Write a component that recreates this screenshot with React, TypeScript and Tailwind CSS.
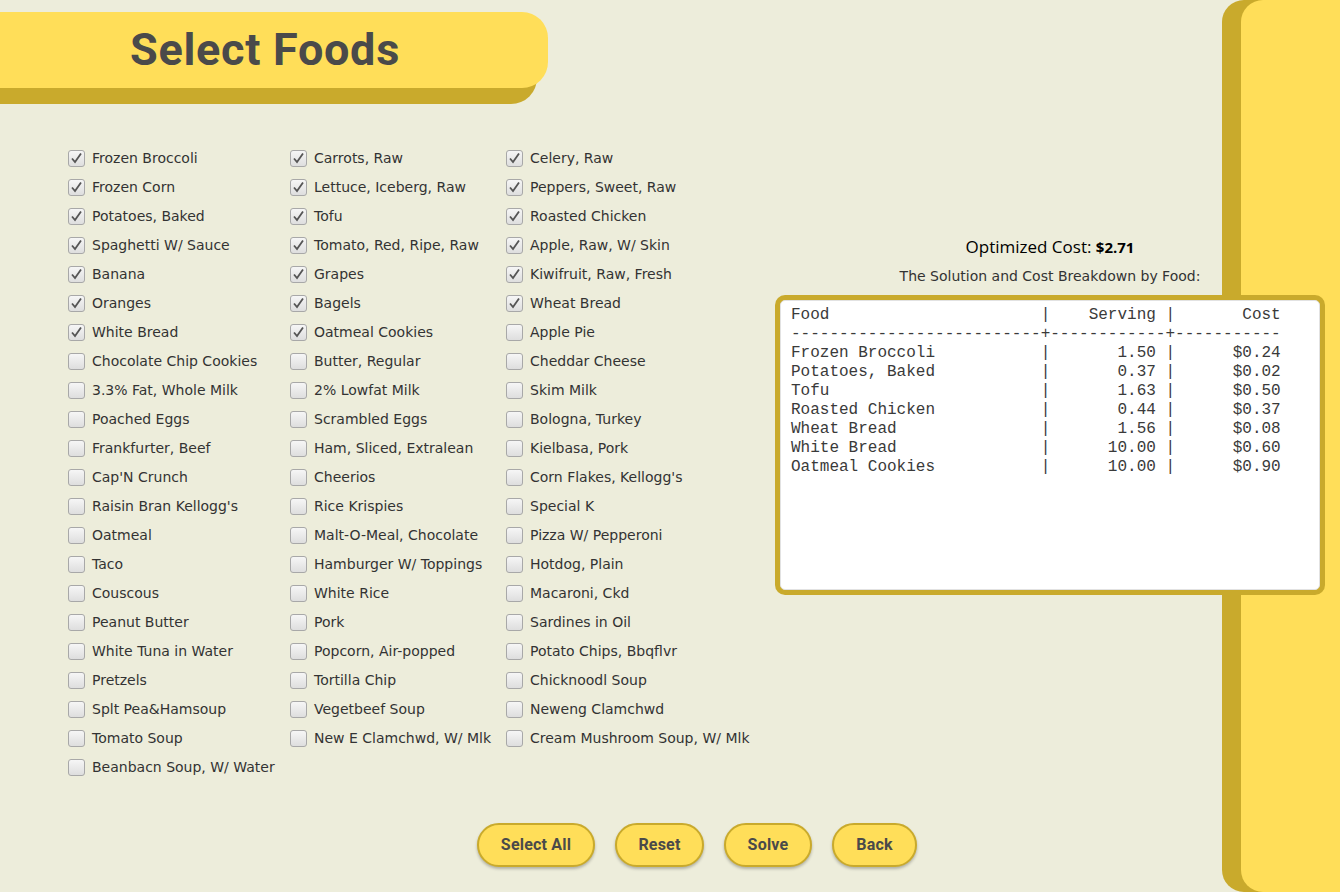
import React from "react";

const FOODS = [
  "Frozen Broccoli", "Carrots, Raw", "Celery, Raw",
  "Frozen Corn", "Lettuce, Iceberg, Raw", "Peppers, Sweet, Raw",
  "Potatoes, Baked", "Tofu", "Roasted Chicken",
  "Spaghetti W/ Sauce", "Tomato, Red, Ripe, Raw", "Apple, Raw, W/ Skin",
  "Banana", "Grapes", "Kiwifruit, Raw, Fresh",
  "Oranges", "Bagels", "Wheat Bread",
  "White Bread", "Oatmeal Cookies", "Apple Pie",
  "Chocolate Chip Cookies", "Butter, Regular", "Cheddar Cheese",
  "3.3% Fat, Whole Milk", "2% Lowfat Milk", "Skim Milk",
  "Poached Eggs", "Scrambled Eggs", "Bologna, Turkey",
  "Frankfurter, Beef", "Ham, Sliced, Extralean", "Kielbasa, Pork",
  "Cap'N Crunch", "Cheerios", "Corn Flakes, Kellogg's",
  "Raisin Bran Kellogg's", "Rice Krispies", "Special K",
  "Oatmeal", "Malt-O-Meal, Chocolate", "Pizza W/ Pepperoni",
  "Taco", "Hamburger W/ Toppings", "Hotdog, Plain",
  "Couscous", "White Rice", "Macaroni, Ckd",
  "Peanut Butter", "Pork", "Sardines in Oil",
  "White Tuna in Water", "Popcorn, Air-popped", "Potato Chips, Bbqflvr",
  "Pretzels", "Tortilla Chip", "Chicknoodl Soup",
  "Splt Pea&Hamsoup", "Vegetbeef Soup", "Neweng Clamchwd",
  "Tomato Soup", "New E Clamchwd, W/ Mlk", "Cream Mushroom Soup, W/ Mlk",
  "Beanbacn Soup, W/ Water",
];

const CHECKED_COUNT = 20;

const RESULTS: [string, string, string][] = [
  ["Frozen Broccoli", "1.50", "$0.24"],
  ["Potatoes, Baked", "0.37", "$0.02"],
  ["Tofu", "1.63", "$0.50"],
  ["Roasted Chicken", "0.44", "$0.37"],
  ["Wheat Bread", "1.56", "$0.08"],
  ["White Bread", "10.00", "$0.60"],
  ["Oatmeal Cookies", "10.00", "$0.90"],
];

const buildReport = () => {
  const lines = [
    "Food".padEnd(26) + "|" + "Serving".padStart(11) + " |" + "Cost".padStart(11),
    "-".repeat(26) + "+" + "-".repeat(12) + "+" + "-".repeat(11),
  ];
  RESULTS.forEach(([name, serving, cost]) => {
    lines.push(name.padEnd(26) + "|" + serving.padStart(11) + " |" + cost.padStart(11));
  });
  return lines.join("\n");
};

const CheckBox = ({ checked }: { checked: boolean }) => (
  <span className="flex h-[17px] w-[17px] shrink-0 items-center justify-center rounded-[3px] border border-[#a8a8a8] bg-gradient-to-b from-[#f6f6f6] to-[#dedede]">
    {checked && (
      <svg width="13" height="13" viewBox="0 0 13 13">
        <polyline points="2,6.5 5,10 11,1.5" fill="none" stroke="#555" strokeWidth="1.8" />
      </svg>
    )}
  </span>
);

const PillButton = ({ label, width }: { label: string; width: string }) => (
  <button
    className={`h-[44px] ${width} rounded-full border-2 border-[#c9aa2c] bg-[#ffde59] text-[16px] font-bold tracking-[0.2px] text-[#4a4a4a] shadow-[0_2px_3px_rgba(0,0,0,0.25)] [font-family:Roboto,sans-serif]`}
  >
    {label}
  </button>
);

export default function App() {
  return (
    <div className="relative h-[892px] w-full overflow-hidden bg-[#ededdb]">
      {/* decorative side panel */}
      <div className="absolute top-0 bottom-0 left-[1222px] right-0 rounded-l-[22px] bg-[#c9aa2c] pl-[19px]">
        <div className="h-full rounded-l-[22px] bg-[#ffde59]" />
      </div>

      <div className="relative pt-[12px]">
        <div className="flex h-[76px] w-[548px] items-center rounded-r-[26px] bg-[#ffde59] pl-[130px] shadow-[-11px_16px_0_#c9aa2c]">
          <h1 className="text-[45px] font-bold tracking-[0.7px] text-[#4a4a4a] [font-family:Roboto,sans-serif]">
            Select Foods
          </h1>
        </div>

        <div className="mt-[56px] flex pl-[68px]">
          <div className="grid w-[707px] grid-cols-[222px_216px_1fr] auto-rows-[29px] [font-family:'DejaVu_Sans',Verdana,sans-serif] text-[14px] text-[#333]">
            {FOODS.map((food, i) => (
              <label key={food} className="flex items-center gap-[7px] whitespace-nowrap">
                <CheckBox checked={i < CHECKED_COUNT} />
                <span>{food}</span>
              </label>
            ))}
          </div>

          <div className="mt-[92px] flex w-[550px] flex-col items-center">
            <div className="h-[22px] text-[17px] leading-[22px] text-black [font-family:'Open_Sans',sans-serif]">
              Optimized Cost: <span className="text-[15px] font-bold">$2.71</span>
            </div>
            <div className="mt-[8px] h-[20px] text-[14px] leading-[20px] text-[#333] [font-family:'DejaVu_Sans',Verdana,sans-serif]">
              The Solution and Cost Breakdown by Food:
            </div>
            <div className="mt-[9px] h-[300px] w-full rounded-[10px] bg-[#c9aa2c] p-[5px]">
              <pre className="h-full w-full rounded-[5px] border border-[#e2e2e2] bg-white px-[10px] pt-[5px] text-[16px] leading-[19px] text-[#3a3a3a] [font-family:'Liberation_Mono',monospace]">
                {buildReport()}
              </pre>
            </div>
          </div>
        </div>

        <div className="mt-[41px] flex gap-[20px] pl-[477px]">
          <PillButton label="Select All" width="w-[118px]" />
          <PillButton label="Reset" width="w-[89px]" />
          <PillButton label="Solve" width="w-[88px]" />
          <PillButton label="Back" width="w-[85px]" />
        </div>
      </div>
    </div>
  );
}
